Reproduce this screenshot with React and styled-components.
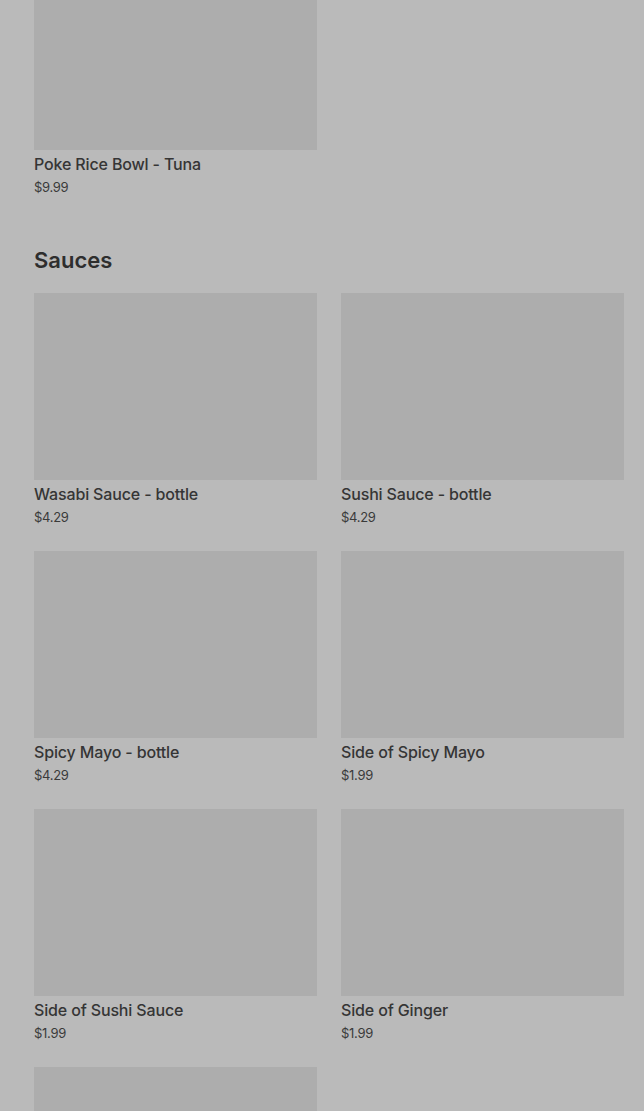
import React from "react";
import styled, { createGlobalStyle } from "styled-components";

const GlobalStyle = createGlobalStyle`
  html, body {
    margin: 0;
    padding: 0;
    background: #bababa;
    font-family: Inter, "Noto Sans", sans-serif;
    color: #333;
  }
`;

const Page = styled.main`
  padding: 0 20px 0 34px;
  margin-top: -37px;
`;

const Section = styled.section`
  margin-bottom: 50px;
`;

const Heading = styled.h2`
  margin: 0 0 19px;
  font-size: 22px;
  line-height: 28px;
  font-weight: 600;
  color: #2e2e2e;
`;

const Grid = styled.div`
  display: grid;
  grid-template-columns: 283px 283px;
  column-gap: 24px;
  row-gap: 25px;
`;

const Card = styled.div`
  display: flex;
  flex-direction: column;
`;

const Thumb = styled.div`
  height: 187px;
  background: #adadad;
`;

const Title = styled.div`
  margin-top: 4px;
  font-size: 16px;
  line-height: 20px;
  font-weight: 500;
  color: #353535;
  letter-spacing: -0.15px;
`;

const Price = styled.div`
  margin-top: 4px;
  font-size: 13px;
  line-height: 18px;
  color: #3a3a3a;
  letter-spacing: -0.3px;
`;

const bowls = [{ name: "Poke Rice Bowl - Tuna", price: "$9.99" }];

const sauces = [
  { name: "Wasabi Sauce - bottle", price: "$4.29" },
  { name: "Sushi Sauce - bottle", price: "$4.29" },
  { name: "Spicy Mayo - bottle", price: "$4.29" },
  { name: "Side of Spicy Mayo", price: "$1.99" },
  { name: "Side of Sushi Sauce", price: "$1.99" },
  { name: "Side of Ginger", price: "$1.99" },
  { name: "", price: "" },
];

const Item = ({ item }) => (
  <Card>
    <Thumb />
    {item.name && <Title>{item.name}</Title>}
    {item.price && <Price>{item.price}</Price>}
  </Card>
);

const App = () => (
  <>
    <GlobalStyle />
    <Page>
      <Section>
        <Grid>
          {bowls.map((item, i) => (
            <Item key={i} item={item} />
          ))}
        </Grid>
      </Section>
      <Section>
        <Heading>Sauces</Heading>
        <Grid>
          {sauces.map((item, i) => (
            <Item key={i} item={item} />
          ))}
        </Grid>
      </Section>
    </Page>
  </>
);

export default App;
